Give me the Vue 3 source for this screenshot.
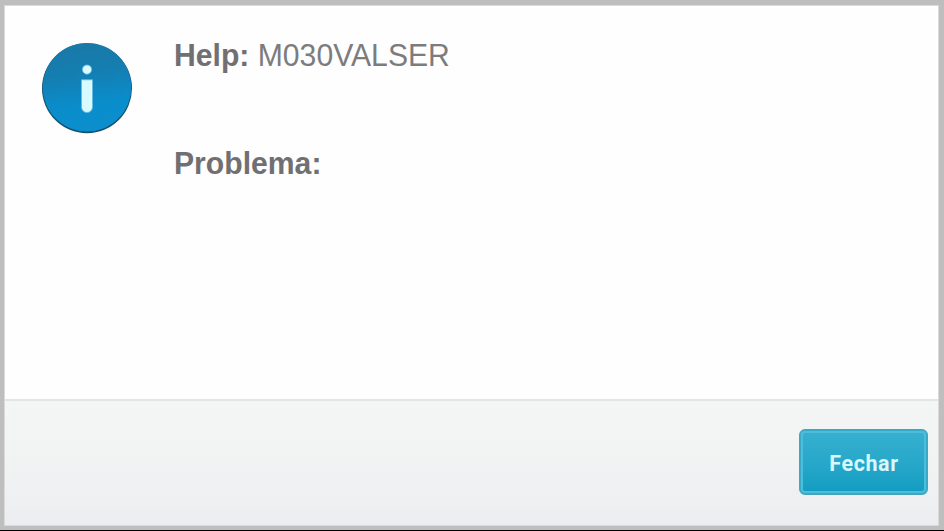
<script setup>
const help = 'M030VALSER'
</script>

<template>
  <div class="screen">
    <section class="dialog" role="dialog">
      <div class="content">
        <svg class="icon" viewBox="0 0 92 92" aria-hidden="true">
          <defs>
            <linearGradient id="disc" x1="0" y1="0" x2="0.15" y2="1">
              <stop offset="0" stop-color="#1b78a5" />
              <stop offset="0.4" stop-color="#147eb1" />
              <stop offset="0.75" stop-color="#0a8dcb" />
              <stop offset="1" stop-color="#0b8ecb" />
            </linearGradient>
          </defs>
          <circle cx="46" cy="46.3" r="45" fill="#15506f" />
          <circle cx="46" cy="45.3" r="44.3" fill="url(#disc)" />
          <circle cx="46" cy="27.6" r="4.6" fill="#d9fbff" stroke="#65b9df" stroke-width="0.8" />
          <path d="M40.5 37.8H51.5V65A5.5 5.5 0 0 1 40.5 65Z" fill="#d9fbff" stroke="#65b9df" stroke-width="0.8" />
        </svg>
        <div class="message">
          <p><b>Help:</b> {{ help }}</p>
          <p><b>Problema:</b></p>
        </div>
      </div>
      <footer class="footer">
        <button class="close" type="button">Fechar</button>
      </footer>
    </section>
  </div>
</template>

<style>
body {
  background: #000;
}
</style>

<style scoped>
.screen {
  box-sizing: border-box;
  height: 530px;
  padding: 5px 5px 4px 4px;
  background: #bebebe;
  font-family: "Liberation Sans", Arial, sans-serif;
}
.dialog {
  box-sizing: border-box;
  display: flex;
  flex-direction: column;
  height: 521px;
  border: 1px solid #dadada;
  background: #fefefe;
}
.content {
  box-sizing: border-box;
  display: flex;
  flex: 1;
  gap: 41px;
  padding: 36px 0 0 36px;
}
.icon {
  width: 92px;
  height: 92px;
}
.message {
  display: flex;
  flex-direction: column;
  gap: 74px;
  color: #7c7c7f;
  font-size: 31.5px;
  line-height: 34px;
}
p {
  margin: -4px 0 4px;
  transform: scaleX(0.957);
  transform-origin: left;
}
b {
  color: #707073;
}
.footer {
  box-sizing: border-box;
  display: flex;
  justify-content: flex-end;
  height: 126px;
  padding: 28px 10px 0 0;
  border-top: 2px solid #e3e4e4;
  background: linear-gradient(#f4f6f5, #f1f3f3 50%, #ebedf0);
}
.close {
  box-sizing: border-box;
  width: 129px;
  height: 66px;
  padding: 3px 0 0 1px;
  border: 1px solid #45a5bd;
  border-radius: 6px;
  background: linear-gradient(#38b0d0, #28a8ca 50%, #129cc0);
  box-shadow: inset 0 0 0 1px #35abc9, inset 0 0 0 3px #4dbeda;
  color: #d9f7ff;
  font: bold 21.5px Roboto, "Liberation Sans", sans-serif;
  letter-spacing: 0.6px;
}
</style>
